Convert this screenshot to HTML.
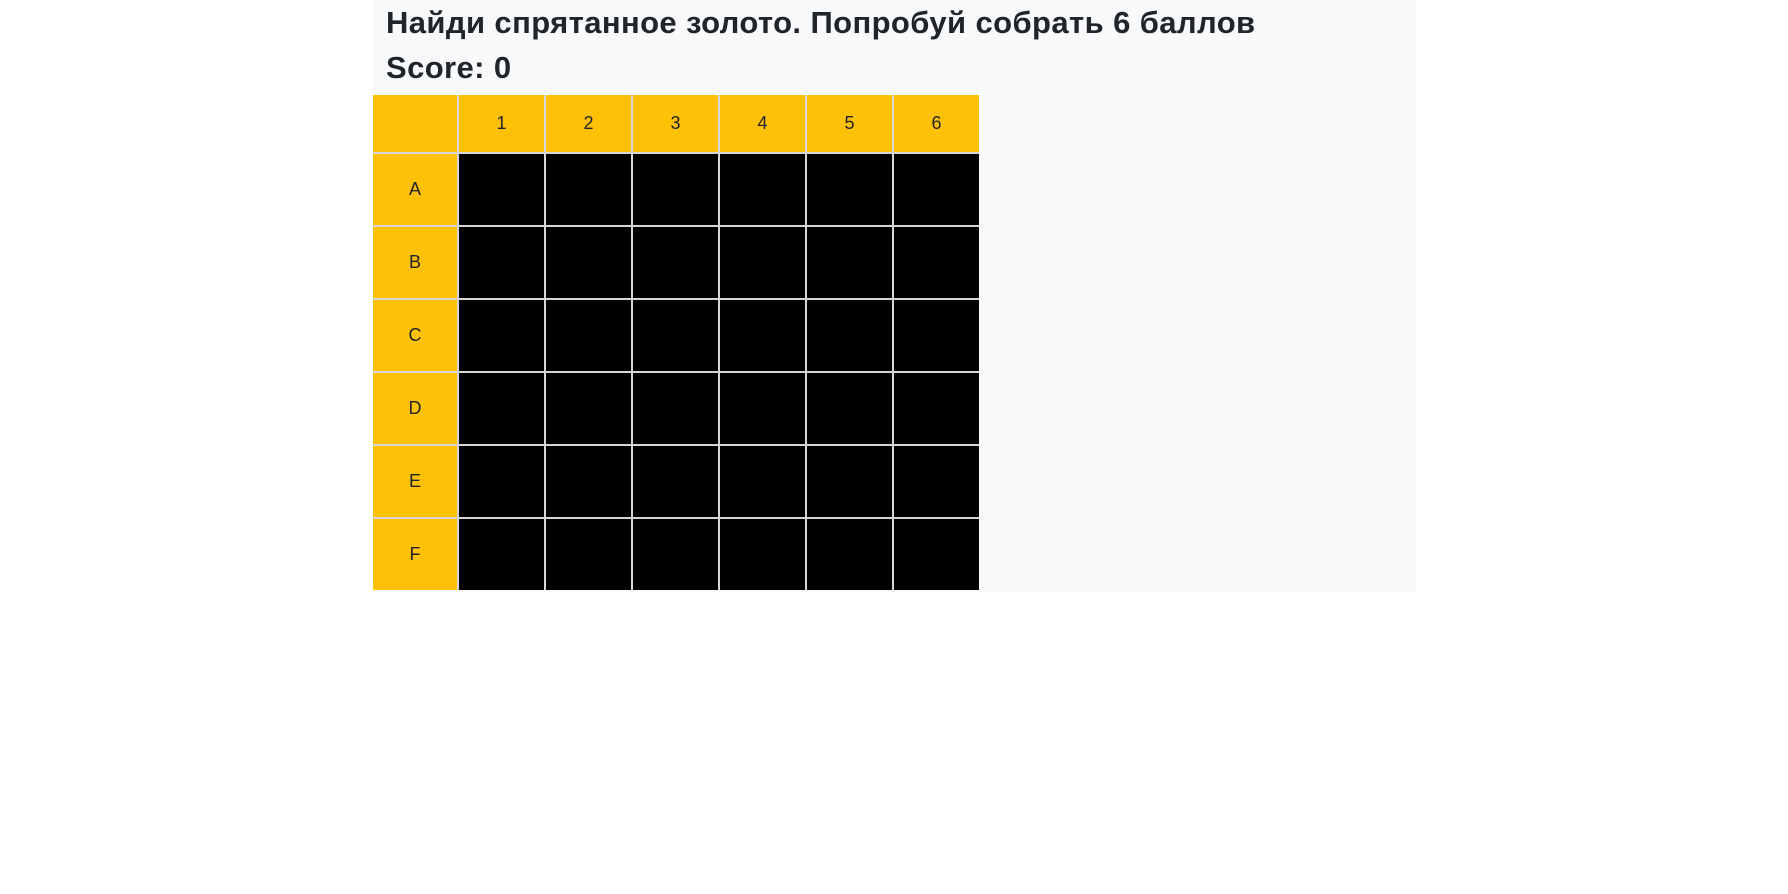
<!DOCTYPE html>
<html><head><meta charset="utf-8"><style>
body{margin:0;background:#fff;width:1788px;height:894px;overflow:hidden;font-family:"Liberation Sans","DejaVu Sans",sans-serif;}
.c{position:absolute;left:373px;top:0;width:1043px;height:592px;background:#f8f9fa;}
h3{margin:0;font-size:31px;font-weight:bold;color:#212529;line-height:45px;padding-left:13px;letter-spacing:0.4px}
table{position:absolute;left:0;top:95px;border-collapse:collapse;}
td{padding:0;text-align:center;font-size:18px;color:#212529;border:2px solid #d6d6d6;}
td.y{background:#ffc107}
td.b{background:#000}
tr.h td{height:57px}
tr.r td{height:71px}
td:first-child{width:84px}
td{width:85px}
table tr:first-child td{border-top:none}
table td:first-child{border-left:none}
table tr:last-child td{border-bottom:none}
table td:last-child{border-right:none}
</style></head><body>
<div class="c">
<h3>Найди спрятанное золото. Попробуй собрать 6 баллов</h3>
<h3>Score: 0</h3>
<table>
<tr class="h"><td class="y"></td><td class="y">1</td><td class="y">2</td><td class="y">3</td><td class="y">4</td><td class="y">5</td><td class="y">6</td></tr>
<tr class="r"><td class="y">A</td><td class="b"></td><td class="b"></td><td class="b"></td><td class="b"></td><td class="b"></td><td class="b"></td></tr>
<tr class="r"><td class="y">B</td><td class="b"></td><td class="b"></td><td class="b"></td><td class="b"></td><td class="b"></td><td class="b"></td></tr>
<tr class="r"><td class="y">C</td><td class="b"></td><td class="b"></td><td class="b"></td><td class="b"></td><td class="b"></td><td class="b"></td></tr>
<tr class="r"><td class="y">D</td><td class="b"></td><td class="b"></td><td class="b"></td><td class="b"></td><td class="b"></td><td class="b"></td></tr>
<tr class="r"><td class="y">E</td><td class="b"></td><td class="b"></td><td class="b"></td><td class="b"></td><td class="b"></td><td class="b"></td></tr>
<tr class="r"><td class="y">F</td><td class="b"></td><td class="b"></td><td class="b"></td><td class="b"></td><td class="b"></td><td class="b"></td></tr>
</table>
</div>
</body></html>
